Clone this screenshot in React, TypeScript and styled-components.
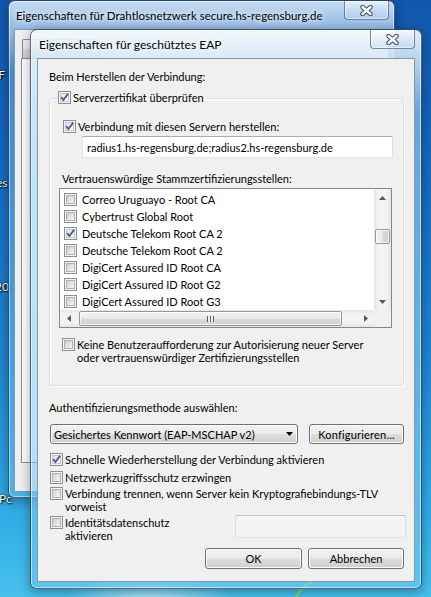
import React from "react";
import styled, { createGlobalStyle } from "styled-components";

const GlobalStyle = createGlobalStyle`
  *, *::before, *::after { box-sizing: border-box; }
  html, body { margin: 0; padding: 0; }
  body {
    width: 431px;
    height: 597px;
    overflow: hidden;
    font-family: Lato, "Liberation Sans", sans-serif;
    font-size: 11px;
    color: #000;
  }
`;

const Desktop = styled.div`
  position: relative;
  width: 431px;
  height: 597px;
  overflow: hidden;
  background:
    radial-gradient(ellipse 90px 30px at 150px 605px, rgba(225, 250, 255, 0.8), rgba(225, 250, 255, 0) 100%),
    linear-gradient(180deg, #1157ae 0%, #176bc2 30%, #1f86d2 60%, #34aee6 88%, #48c0ee 100%);
`;

const Wallpaper = styled.svg`
  position: absolute;
  left: 0;
  top: 0;
  width: 431px;
  height: 597px;
`;

const IconLabel = styled.span<{ $top: number; $left: number }>`
  position: absolute;
  top: ${(p) => p.$top}px;
  left: ${(p) => p.$left}px;
  color: #fff;
  font-size: 12px;
  line-height: 14px;
  white-space: nowrap;
  text-shadow: 0 0 2px #000, 1px 1px 2px #000;
`;

/* ---------- window chrome ---------- */

const Window = styled.div<{ $left: number; $top: number; $width: number; $height: number; $pad: number }>`
  position: absolute;
  left: ${(p) => p.$left}px;
  top: ${(p) => p.$top}px;
  width: ${(p) => p.$width}px;
  height: ${(p) => p.$height}px;
  padding: 0 ${(p) => p.$pad}px ${(p) => p.$pad}px;
  display: flex;
  flex-direction: column;
  border: 1px solid rgba(24, 44, 74, 0.7);
  border-radius: 7px 7px 6px 6px;
  box-shadow: inset 0 0 0 1px rgba(255, 255, 255, 0.55), 0 3px 12px rgba(0, 0, 0, 0.35);
`;

const BackWindow = styled(Window)`
  background: linear-gradient(
    180deg,
    rgba(214, 231, 248, 0.92) 0px,
    rgba(176, 208, 238, 0.8) 28px,
    rgba(110, 180, 235, 0.5) 70px,
    rgba(100, 190, 240, 0.5) 100%
  );
`;

const FrontWindow = styled(Window)`
  background: linear-gradient(
    180deg,
    rgba(242, 248, 253, 0.93) 0px,
    rgba(214, 233, 249, 0.85) 28px,
    rgba(160, 212, 244, 0.6) 80px,
    rgba(110, 200, 242, 0.6) 100%
  );
`;

const TitleBar = styled.div`
  height: 28px;
  flex: none;
  display: flex;
  align-items: center;
`;

const Title = styled.span<{ $size: number }>`
  margin-left: 2px;
  font-size: ${(p) => p.$size}px;
  white-space: nowrap;
  text-shadow: 0 0 5px #fff, 0 0 9px rgba(255, 255, 255, 0.9);
`;

const CloseButton = styled.div`
  margin-left: auto;
  align-self: flex-start;
  width: 45px;
  height: 19px;
  flex: none;
  display: flex;
  align-items: center;
  justify-content: center;
  border: 1px solid rgba(40, 62, 94, 0.6);
  border-top: none;
  border-radius: 0 0 4px 4px;
  background: linear-gradient(
    180deg,
    rgba(255, 255, 255, 0.6) 0%,
    rgba(225, 238, 250, 0.4) 50%,
    rgba(190, 214, 240, 0.45) 100%
  );
  box-shadow: inset 0 0 0 1px rgba(255, 255, 255, 0.55);
`;

const CloseGlyph = () => (
  <svg width="13" height="11" viewBox="0 0 13 11">
    <path d="M2.5 2 L10.5 9 M10.5 2 L2.5 9" stroke="#3b4c63" strokeWidth="4.4" strokeLinecap="round" />
    <path d="M2.5 2 L10.5 9 M10.5 2 L2.5 9" stroke="#fff" strokeWidth="2.4" strokeLinecap="round" />
  </svg>
);

const Client = styled.div`
  flex: 1;
  display: flex;
  flex-direction: column;
  background: #f0f0f0;
  border: 1px solid rgba(64, 92, 124, 0.6);
  min-height: 0;
`;

/* ---------- back dialog ---------- */

const TabStrip = styled.div`
  display: flex;
  height: 19px;
  margin-top: 9px;
  padding-left: 7px;
  flex: none;
`;

const Tab = styled.div`
  width: 78px;
  border: 1px solid #898c95;
  border-bottom: none;
  border-radius: 2px 2px 0 0;
  background: linear-gradient(180deg, #f3f3f3 0%, #ebebeb 50%, #dddddd 51%, #cfcfcf 100%);
`;

const TabPage = styled.div`
  flex: 1;
  margin: 0 7px 28px 6px;
  border: 1px solid #898c95;
  background: #fff;
`;

/* ---------- front dialog content ---------- */

const Content = styled(Client)`
  padding: 10px 10px 0 11px;
`;

const Label = styled.div<{ $ml?: number; $mt?: number }>`
  line-height: 15px;
  white-space: nowrap;
  margin-left: ${(p) => p.$ml ?? 0}px;
  margin-top: ${(p) => p.$mt ?? 0}px;
`;

const Group = styled.fieldset`
  margin: 6px 0 0 0;
  padding: 0 11px 21px 9px;
  min-width: 0;
  border: 1px solid #d5dfe5;
  border-radius: 3px;
  box-shadow: inset 1px 1px 0 #fff, 1px 1px 0 #fff;
`;

const Legend = styled.legend`
  padding: 0 3px 0 0;
  margin-left: -1px;
  line-height: 15px;
`;

const LegendInner = styled.span`
  display: inline-flex;
  align-items: center;
  gap: 2px;
  white-space: nowrap;
`;

const CheckRow = styled.div<{ $ml?: number; $mt?: number }>`
  display: flex;
  align-items: flex-start;
  gap: 2px;
  line-height: 13px;
  white-space: nowrap;
  margin-left: ${(p) => p.$ml ?? 0}px;
  margin-top: ${(p) => p.$mt ?? 0}px;
`;

const BoxOuter = styled.span<{ $checked?: boolean }>`
  position: relative;
  flex: none;
  width: 13px;
  height: 13px;
  border: 1px solid #8e8f8f;
  background: #f4f4f4;

  &::before {
    content: "";
    position: absolute;
    inset: 1px;
    border: 1px solid ${(p) => (p.$checked ? "#c4c8cd" : "#adb2b8")};
    background: ${(p) =>
      p.$checked
        ? "linear-gradient(135deg, #dfe2e6 0%, #f6f6f6 70%, #ffffff 100%)"
        : "linear-gradient(135deg, #c9cdd3 0%, #e4e5e7 55%, #f7f7f7 100%)"};
  }
`;

const CheckMark = styled.svg`
  position: absolute;
  left: 0;
  top: 0;
  width: 11px;
  height: 11px;
`;

const CheckBox: React.FC<{ checked?: boolean }> = ({ checked }) => (
  <BoxOuter $checked={checked}>
    {checked && (
      <CheckMark viewBox="0 0 11 11">
        <path d="M2.2 5.2 L4.4 8 L9.2 1.6" fill="none" stroke="#4a5f97" strokeWidth="1.9" />
      </CheckMark>
    )}
  </BoxOuter>
);

const TextField = styled.div<{ $disabled?: boolean }>`
  display: flex;
  align-items: center;
  padding: 0 4px;
  white-space: nowrap;
  border: 1px solid;
  border-color: ${(p) => (p.$disabled ? "#c2c4c8 #dadcdf #e2e4e7 #dadcdf" : "#abadb3 #dbdfe6 #e3e9ef #e2e3ea")};
  background: ${(p) => (p.$disabled ? "#f4f4f4" : "#fff")};
`;

const ServerField = styled(TextField)`
  height: 22px;
  margin: 3px -1px 0 23px;
`;

const IdentityField = styled(TextField)`
  width: 171px;
  height: 23px;
  margin-left: auto;
  margin-right: -2px;
`;

/* ---------- list with scroll bars ---------- */

const ListBox = styled.div`
  margin-top: 2px;
  height: 140px;
  border: 1px solid #828790;
  background: #fff;
  display: grid;
  grid-template-columns: 1fr 17px;
  grid-template-rows: 1fr 17px;
`;

const ListItems = styled.div`
  overflow: hidden;
  padding-top: 2px;
`;

const ListRow = styled.div`
  height: 17px;
  display: flex;
  align-items: center;
  gap: 5px;
  padding-left: 4px;
  white-space: nowrap;
`;

const VScroll = styled.div`
  display: flex;
  flex-direction: column;
  background: linear-gradient(90deg, #e6e6e6 0%, #f3f3f3 25%, #f3f3f3 75%, #e6e6e6 100%);
`;

const HScroll = styled.div`
  display: flex;
  background: linear-gradient(180deg, #e6e6e6 0%, #f3f3f3 25%, #f3f3f3 75%, #e6e6e6 100%);
`;

const ScrollCorner = styled.div`
  background: #f0f0f0;
`;

const ArrowCell = styled.div`
  flex: none;
  width: 17px;
  height: 17px;
  display: flex;
  align-items: center;
  justify-content: center;
`;

const Track = styled.div`
  flex: 1;
  display: flex;
`;

const VThumb = styled.div`
  margin: 23px 1px 0 1px;
  width: 15px;
  height: 15px;
  border: 1px solid #989898;
  border-radius: 2px;
  background: linear-gradient(90deg, #f4f4f4 0%, #e8e8e8 50%, #d9d9d9 51%, #d2d2d2 100%);
  box-shadow: inset 0 0 0 1px rgba(255, 255, 255, 0.7);
`;

const HThumb = styled.div`
  margin: 1px 0 1px 2px;
  width: 263px;
  height: 15px;
  border: 1px solid #989898;
  border-radius: 2px;
  background: linear-gradient(180deg, #f4f4f4 0%, #e8e8e8 50%, #d9d9d9 51%, #d2d2d2 100%);
  box-shadow: inset 0 0 0 1px rgba(255, 255, 255, 0.7);
  display: flex;
  align-items: center;
  justify-content: center;
`;

const Grip = styled.span`
  width: 7px;
  height: 6px;
  background: repeating-linear-gradient(90deg, #5c5c5c 0 1px, #f0f0f0 1px 3px);
`;

const Arrow: React.FC<{ dir: "up" | "down" | "left" | "right"; color?: string }> = ({ dir, color = "#5a5a5a" }) => {
  const pts = {
    up: "0,4 3.5,0 7,4",
    down: "0,0 3.5,4 7,0",
    left: "4,0 0,3.5 4,7",
    right: "0,0 4,3.5 0,7",
  }[dir];
  const vertical = dir === "up" || dir === "down";
  return (
    <svg width={vertical ? 7 : 4} height={vertical ? 4 : 7} viewBox={vertical ? "0 0 7 4" : "0 0 4 7"}>
      <polygon points={pts} fill={color} />
    </svg>
  );
};

/* ---------- buttons ---------- */

const Button = styled.div<{ $width: number }>`
  width: ${(p) => p.$width}px;
  height: 21px;
  flex: none;
  display: flex;
  align-items: center;
  justify-content: center;
  white-space: nowrap;
  border: 1px solid #707070;
  border-radius: 3px;
  background: linear-gradient(180deg, #f2f2f2 0%, #ebebeb 48%, #dddddd 52%, #cfcfcf 100%);
  box-shadow: inset 0 0 0 1px #fcfcfc;
`;

const Combo = styled(Button)`
  height: 20px;
  margin-left: 1px;
  justify-content: space-between;
  padding: 0 4px 0 3px;
`;

const ConfigButton = styled(Button)`
  height: 20px;
  margin-left: auto;
  letter-spacing: 0.2px;
`;

const ControlsRow = styled.div`
  display: flex;
  margin-top: 9px;
`;

const IdentityRow = styled.div`
  display: flex;
  align-items: flex-start;
  margin-top: 2px;
`;

const ButtonRow = styled.div`
  display: flex;
  justify-content: flex-end;
  gap: 6px;
  margin-top: 6px;
`;

type Cert = { name: string; checked?: boolean };

const certs: Cert[] = [
  { name: "Correo Uruguayo - Root CA" },
  { name: "Cybertrust Global Root" },
  { name: "Deutsche Telekom Root CA 2", checked: true },
  { name: "Deutsche Telekom Root CA 2" },
  { name: "DigiCert Assured ID Root CA" },
  { name: "DigiCert Assured ID Root G2" },
  { name: "DigiCert Assured ID Root G3" },
];

const desktopLabels = [
  { text: "t F", top: 68, left: -9 },
  { text: "es", top: 176, left: -4 },
  { text: "20", top: 280, left: -5 },
  { text: "Pc", top: 492, left: -1 },
];

const App: React.FC = () => {
  return (
    <>
      <GlobalStyle />
      <Desktop>
        <Wallpaper viewBox="0 0 431 597">
          <path d="M296 597 C 300 590, 304 586, 312 582" stroke="#9ee05a" strokeWidth="2" fill="none" opacity="0.8" />
        </Wallpaper>
        {desktopLabels.map((l) => (
          <IconLabel key={l.text} $top={l.top} $left={l.left}>
            {l.text}
          </IconLabel>
        ))}

        <BackWindow $left={8} $top={0} $width={387} $height={498} $pad={5}>
          <TitleBar>
            <Title $size={11.5}>Eigenschaften für Drahtlosnetzwerk secure.hs-regensburg.de</Title>
            <CloseButton>
              <CloseGlyph />
            </CloseButton>
          </TitleBar>
          <Client>
            <TabStrip>
              <Tab />
            </TabStrip>
            <TabPage />
          </Client>
        </BackWindow>

        <FrontWindow $left={30} $top={29} $width={392} $height={560} $pad={6}>
          <TitleBar>
            <Title $size={12}>Eigenschaften für geschütztes EAP</Title>
            <CloseButton>
              <CloseGlyph />
            </CloseButton>
          </TitleBar>
          <Content>
            <Label>Beim Herstellen der Verbindung:</Label>
            <Group>
              <Legend>
                <LegendInner>
                  <CheckBox checked />
                  Serverzertifikat überprüfen
                </LegendInner>
              </Legend>
              <CheckRow $ml={4} $mt={13}>
                <CheckBox checked />
                Verbindung mit diesen Servern herstellen:
              </CheckRow>
              <ServerField>radius1.hs-regensburg.de;radius2.hs-regensburg.de</ServerField>
              <Label $ml={3} $mt={13}>
                Vertrauenswürdige Stammzertifizierungsstellen:
              </Label>
              <ListBox>
                <ListItems>
                  {certs.map((c, i) => (
                    <ListRow key={i}>
                      <CheckBox checked={c.checked} />
                      {c.name}
                    </ListRow>
                  ))}
                </ListItems>
                <VScroll>
                  <ArrowCell>
                    <Arrow dir="up" />
                  </ArrowCell>
                  <Track>
                    <VThumb />
                  </Track>
                  <ArrowCell>
                    <Arrow dir="down" />
                  </ArrowCell>
                </VScroll>
                <HScroll>
                  <ArrowCell>
                    <Arrow dir="left" />
                  </ArrowCell>
                  <Track>
                    <HThumb>
                      <Grip />
                    </HThumb>
                  </Track>
                  <ArrowCell>
                    <Arrow dir="right" />
                  </ArrowCell>
                </HScroll>
                <ScrollCorner />
              </ListBox>
              <CheckRow $ml={3} $mt={10}>
                <CheckBox />
                <span>
                  Keine Benutzeraufforderung zur Autorisierung neuer Server
                  <br />
                  oder vertrauenswürdiger Zertifizierungsstellen
                </span>
              </CheckRow>
            </Group>

            <Label $mt={14}>Authentifizierungsmethode auswählen:</Label>
            <ControlsRow>
              <Combo $width={248}>
                Gesichertes Kennwort (EAP-MSCHAP v2)
                <Arrow dir="down" color="#000" />
              </Combo>
              <ConfigButton $width={95}>Konfigurieren...</ConfigButton>
            </ControlsRow>

            <CheckRow $ml={1} $mt={9}>
              <CheckBox checked />
              Schnelle Wiederherstellung der Verbindung aktivieren
            </CheckRow>
            <CheckRow $ml={1} $mt={5}>
              <CheckBox />
              Netzwerkzugriffsschutz erzwingen
            </CheckRow>
            <CheckRow $ml={1} $mt={3}>
              <CheckBox />
              <span>
                Verbindung trennen, wenn Server kein Kryptografiebindungs-TLV
                <br />
                vorweist
              </span>
            </CheckRow>
            <IdentityRow>
              <CheckRow $ml={1} $mt={1}>
                <CheckBox />
                <span>
                  Identitätsdatenschutz
                  <br />
                  aktivieren
                </span>
              </CheckRow>
              <IdentityField $disabled />
            </IdentityRow>

            <ButtonRow>
              <Button $width={97}>OK</Button>
              <Button $width={96}>Abbrechen</Button>
            </ButtonRow>
          </Content>
        </FrontWindow>
      </Desktop>
    </>
  );
};

export default App;
